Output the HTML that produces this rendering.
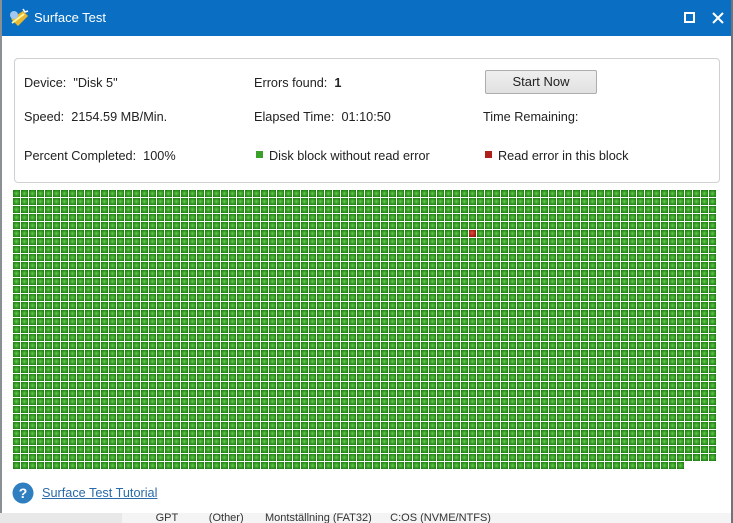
<!DOCTYPE html>
<html><head><style>
*{margin:0;padding:0;box-sizing:border-box}
body{width:733px;height:523px;overflow:hidden;background:#6f7479;font-family:"Liberation Sans",sans-serif;position:relative}
.win{position:absolute;left:0;top:0;width:731px;height:513px;background:#fff;border-left:2px solid #8a8f94}
.title{position:absolute;left:0;top:0;width:731px;height:36px;background:#0a6fc2;color:#fff;font-size:13px}
.title span{position:absolute;left:32px;top:10px}
.panel{position:absolute;left:12px;top:58px;width:706px;height:125px;border:1px solid #d0d0d0;border-radius:4px;background:#fff}
.t{position:absolute;font-size:12.7px;color:#222;white-space:nowrap}
.btn{position:absolute;left:483px;top:70px;width:112px;height:24px;border:1px solid #adadad;border-radius:2px;background:linear-gradient(#efefef,#e1e1e1);font-size:13px;text-align:center;line-height:22px;color:#222}
.grid{position:absolute;left:13px;top:190px;width:704px;height:272px}
.row{position:absolute;left:13px;top:462px;width:672px;height:8px}
.cell{background-image:
 linear-gradient(90deg,rgba(255,255,255,0) 7px,#fff 7px),
 linear-gradient(rgba(255,255,255,0) 7px,#fff 7px),
 radial-gradient(circle at 3.5px 3.5px,#6cc850 0,#45ad32 1.5px,#2a8f1c 3px,#1b7010 5px);
 background-size:8px 8px;background-repeat:repeat}
.err{position:absolute;left:469px;top:230px;width:7px;height:7px;background:radial-gradient(circle at 3px 3px,#e05040,#b0201a 3px,#801510 5px)}
.sq{position:absolute;width:7px;height:7px}
</style></head><body>
<div class="win">
<div class="title">
<svg style="position:absolute;left:6px;top:7px" width="22" height="22" viewBox="0 0 22 22"><path d="M3 12 L15 4 L20 9 L10 19 Z" fill="#e8b830"/><path d="M4 16 L16 7" stroke="#fff6a0" stroke-width="2"/><circle cx="6" cy="8" r="4" fill="#a0c8f0"/><path d="M15 2 L17 5 L20 4" stroke="#fff" stroke-width="1.5" fill="none"/></svg>
<span>Surface Test</span>
<div style="position:absolute;left:682px;top:12px;width:11px;height:11px;border:2px solid #fff"></div>
<svg style="position:absolute;left:710px;top:12px" width="12" height="12"><path d="M1 1L11 11M11 1L1 11" stroke="#fff" stroke-width="2"/></svg>
</div>
<div class="panel"></div>
<div class="t" style="left:22px;top:76px">Device:&nbsp; "Disk 5"</div>
<div class="t" style="left:22px;top:110px">Speed:&nbsp; 2154.59 MB/Min.</div>
<div class="t" style="left:22px;top:149px">Percent Completed:&nbsp; 100%</div>
<div class="t" style="left:252px;top:76px">Errors found:&nbsp; <b>1</b></div>
<div class="t" style="left:252px;top:110px">Elapsed Time:&nbsp; 01:10:50</div>
<div class="sq" style="left:254px;top:151px;background:#3aa02a"></div>
<div class="t" style="left:267px;top:149px">Disk block without read error</div>
<div class="btn">Start Now</div>
<div class="t" style="left:481px;top:110px">Time Remaining:</div>
<div class="sq" style="left:483px;top:151px;background:#b0201a"></div>
<div class="t" style="left:496px;top:149px">Read error in this block</div>
</div>
<div class="grid cell"></div>
<div class="row cell"></div>
<div class="err"></div>
<svg style="position:absolute;left:12px;top:482px" width="22" height="22"><circle cx="11" cy="11" r="10.5" fill="#2f7fc0"/><text x="11" y="16" font-size="14" font-weight="bold" fill="#fff" text-anchor="middle" font-family="Liberation Sans">?</text></svg>
<div class="t" style="left:42px;top:486px;color:#2a6aa8;text-decoration:underline">Surface Test Tutorial</div>
<div style="position:absolute;left:0;top:513px;width:733px;height:10px;background:#e8e8e8"></div>
<div style="position:absolute;left:122px;top:513px;width:611px;height:10px;background:#f4f4f4;font-size:11px;color:#333;line-height:10px;overflow:hidden">&nbsp;&nbsp;&nbsp;&nbsp;&nbsp;&nbsp;&nbsp;&nbsp;&nbsp;&nbsp;&nbsp;GPT&nbsp;&nbsp;&nbsp;&nbsp;&nbsp;&nbsp;&nbsp;&nbsp;&nbsp;&nbsp;(Other)&nbsp;&nbsp;&nbsp;&nbsp;&nbsp;&nbsp;&nbsp;Montställning (FAT32)&nbsp;&nbsp;&nbsp;&nbsp;&nbsp;&nbsp;C:OS (NVME/NTFS)</div>
<div style="position:absolute;left:731px;top:0;width:2px;height:523px;background:#6f7479"></div>
</body></html>
